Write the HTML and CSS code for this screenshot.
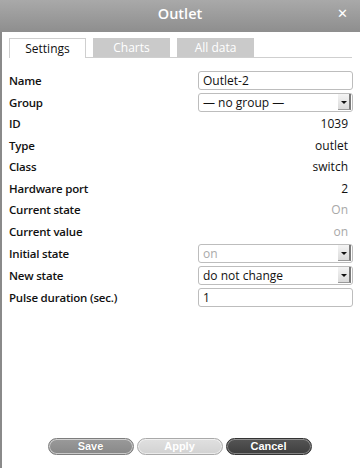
FILE: index.html
```html
<!DOCTYPE html>
<html>
<head>
<meta charset="utf-8">
<link rel="stylesheet" href="styles.css">
</head>
<body>
<div class="dialog">
  <div class="titlebar">
    <span class="title">Outlet</span>
    <span class="close">&#x2715;</span>
  </div>
  <div class="body">
    <div class="tabs">
      <div class="tab active">Settings</div>
      <div class="tab">Charts</div>
      <div class="tab">All data</div>
    </div>
    <div class="form">
      <div class="row in"><span class="label">Name</span><div class="input">Outlet-2</div></div>
      <div class="row in"><span class="label">Group</span><div class="select"><span>— no group —</span><span class="arrow"></span></div></div>
      <div class="row"><span class="label">ID</span><span class="value">1039</span></div>
      <div class="row"><span class="label">Type</span><span class="value">outlet</span></div>
      <div class="row"><span class="label">Class</span><span class="value">switch</span></div>
      <div class="row"><span class="label">Hardware port</span><span class="value">2</span></div>
      <div class="row"><span class="label">Current state</span><span class="value muted">On</span></div>
      <div class="row"><span class="label">Current value</span><span class="value muted">on</span></div>
      <div class="row in"><span class="label">Initial state</span><div class="select disabled"><span>on</span><span class="arrow"></span></div></div>
      <div class="row in"><span class="label">New state</span><div class="select"><span>do not change</span><span class="arrow"></span></div></div>
      <div class="row in"><span class="label">Pulse duration (sec.)</span><div class="input">1</div></div>
    </div>
    <div class="buttons">
      <button class="btn save">Save</button>
      <button class="btn apply">Apply</button>
      <button class="btn cancel">Cancel</button>
    </div>
  </div>
</div>
</body>
</html>
```
FILE: styles.css
```css
* { box-sizing: border-box; }
html, body { margin: 0; padding: 0; background: #fff; }
body { font-family: "Open Sans", "Noto Sans", sans-serif; color: #111; width: 360px; height: 468px; overflow: hidden; }
.dialog { width: 360px; height: 468px; display: flex; flex-direction: column; }
.titlebar {
  height: 32px; flex: none;
  background: linear-gradient(#a9a9a9, #8e8e8e);
  display: flex; align-items: center; justify-content: center;
  position: relative;
}
.title { color: #fff; font-size: 14.5px; font-weight: 600; margin-top: -6px; }
.close { position: absolute; right: 12px; top: 6px; color: #fff; font-size: 13px; font-weight: bold; font-family: "DejaVu Sans", sans-serif; }
.body { flex: 1; border-left: 2px solid #8a8a8a; padding: 6px 7px 0 7px; display: flex; flex-direction: column; }
.tabs { display: flex; gap: 7px; height: 20px; border-bottom: 1px solid #cfcfcf; margin-right: 1px; }
.tab {
  width: 77px; height: 19px; background: #cacaca; color: #fff;
  font-size: 12px; text-align: center; line-height: 19px;
}
.tab.active { background: #fff; color: #111; border: 1px solid #cfcfcf; border-bottom: none; height: 20px; line-height: 19px; }
.form { margin-top: 11px; display: flex; flex-direction: column; }
.row { display: flex; align-items: center; justify-content: space-between; height: 21.5px; font-size: 11.5px; }
.row.in { height: 22px; }
.label { font-weight: 600; letter-spacing: -0.2px; }
.value { margin-right: 5px; font-size: 12px; }
.muted { color: #a8a8a8; }
.input, .select {
  width: 155px; height: 19px; border: 1px solid #bdbdbd; border-radius: 3px;
  font-size: 12px; padding-left: 4px; line-height: 17px; background: #fff;
}
.select { display: flex; justify-content: space-between; align-items: center; padding-right: 1px; }
.select.disabled { color: #aaa; }
.arrow {
  width: 13px; height: 16px; position: relative;
  background: linear-gradient(#f4f4f4, #dadada);
  border-right: 2px solid #7a7a7a; border-bottom: 1px solid #9a9a9a;
}
.arrow::after {
  content: ""; position: absolute; left: 3px; top: 7px;
  border-left: 3px solid transparent; border-right: 3px solid transparent; border-top: 3px solid #111;
}
.buttons { margin-top: auto; margin-bottom: 13px; display: flex; justify-content: center; gap: 3px; padding-right: 3px; }
.btn {
  width: 86px; height: 17px; border-radius: 9px; border: 1px solid #7d7d7d;
  box-shadow: inset 0 0 0 1px rgba(255,255,255,0.55);
  font-family: "Liberation Sans", Arial, sans-serif; font-weight: bold; font-size: 11px; color: #fff;
  padding: 0; line-height: 15px; text-shadow: 0 0 1px rgba(0,0,0,0.3);
}
.save { background: linear-gradient(#9a9a9a, #888); }
.apply { background: linear-gradient(#e0e0e0, #d2d2d2); border-color: #a9a9a9; text-shadow: none; }
.cancel { background: linear-gradient(#555, #3e3e3e); border-color: #333; box-shadow: inset 0 0 0 1px rgba(255,255,255,0.35); }
```
